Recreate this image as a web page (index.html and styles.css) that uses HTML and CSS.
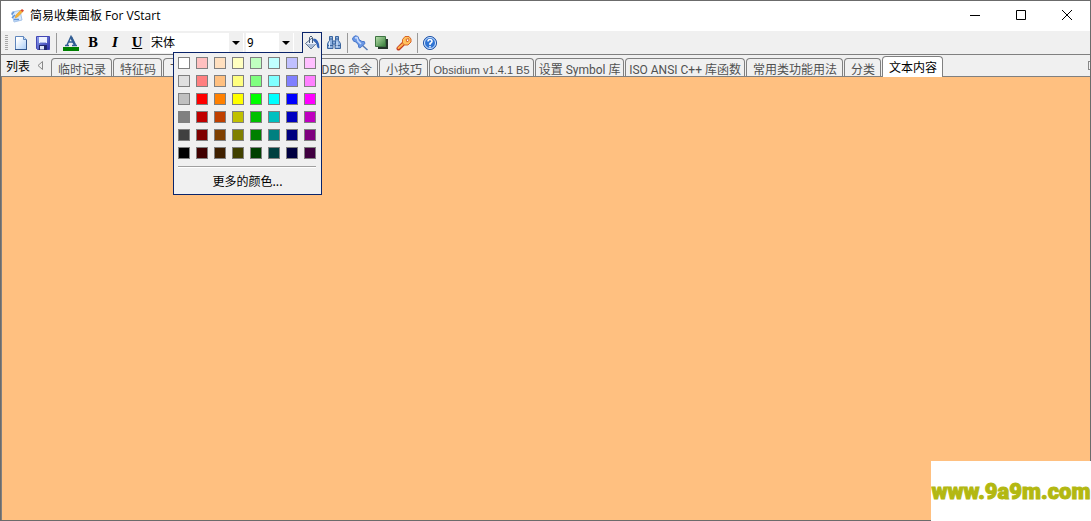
FILE: index.html
```html
<!DOCTYPE html>
<html lang="zh-CN">
<head>
<meta charset="utf-8">
<title>简易收集面板 For VStart</title>
<link rel="stylesheet" href="styles.css">
</head>
<body>
<div class="window">
  <header class="titlebar">
    <svg class="app-icon" width="14" height="14" viewBox="0 0 14 14"><path d="M2 3 10 1.500 12 11 4 13Z" fill="#d9e9fb" stroke="#a5c3ea"/><path d="M1.500 5.500 4 3M2 9l3-3M4 10.500h5" stroke="#5d94dc" stroke-width="1.500"/><path d="M5 9 6 6 11 1l2 1.500L7.500 8Z" fill="#f6b436" stroke="#d99a3a" stroke-width=".6"/><path d="m10.500 1.500 1.500-1.500 2 1.500L12.500 3Z" fill="#dc4934"/></svg>
    <h1 class="title">简易收集面板 For VStart</h1>
    <div class="caption-buttons">
      <button class="caption" aria-label="最小化"><svg width="12" height="12"><path d="M1 5.500h10" stroke="#000"/></svg></button>
      <button class="caption" aria-label="最大化"><svg width="12" height="12"><path d="M1.500.500h9v9h-9z" fill="none" stroke="#000"/></svg></button>
      <button class="caption" aria-label="关闭"><svg width="12" height="12"><path d="m1 0 10 10M11 0 1 10" stroke="#000"/></svg></button>
    </div>
  </header>

  <div class="toolbar">
    <span class="grip"></span>
    <button class="tool" aria-label="新建"><svg width="16" height="16" viewBox="0 0 16 16"><defs><linearGradient id="doc" x2="1" y2="1"><stop offset=".2" stop-color="#fff"/><stop offset="1" stop-color="#a9cdf7"/></linearGradient></defs><path d="M2.500 1.500h8l3 3v10h-11z" fill="url(#doc)" stroke="#5f86bd"/><path d="M2 14.500h12M13.500 5v10" stroke="#34588f"/><path d="M10.500 1.500v3h3" fill="#c9def8" stroke="#5f86bd"/></svg></button>
    <button class="tool" aria-label="保存"><svg width="16" height="16" viewBox="0 0 16 16"><defs><linearGradient id="disk" x2="1" y2="1"><stop stop-color="#8fa2f0"/><stop offset="1" stop-color="#2b2fa8"/></linearGradient></defs><path d="M1.500 1.500h13v13h-12l-1-1z" fill="url(#disk)" stroke="#4347b4"/><path d="M4 2h8v6H4z" fill="#eef2ff"/><path d="M4 10h8v5H4z" fill="#20266c"/><path d="M5 11h4v3.500H5z" fill="#dce3f7"/><path d="M5 7.500h6" stroke="#afbce9"/></svg></button>
    <span class="divider"></span>
    <button class="tool" aria-label="文字颜色"><svg width="16" height="16" viewBox="0 0 16 16"><path d="M0 12h16v4H0z" fill="#008000"/><path d="M2 10.500h4M9 10.500h5M4 10 8 1.500 12 10M5.500 7h5" fill="none" stroke="#315d94" stroke-width="1.500"/><path d="m8 2 4 8" stroke="#315d94" stroke-width="2.500"/></svg></button>
    <button class="tool letter">B</button>
    <button class="tool letter italic">I</button>
    <button class="tool letter underline">U</button>
    <span class="combo font-name">
      <select aria-label="字体"><option>宋体</option></select>
      <svg class="arrow" width="8" height="4"><path d="M0 0h8L4 4z" fill="#000"/></svg>
    </span>
    <span class="combo font-size">
      <select aria-label="字号"><option>9</option></select>
      <svg class="arrow" width="8" height="4"><path d="M0 0h8L4 4z" fill="#000"/></svg>
    </span>
    <div class="fill">
      <button class="fill-button" aria-label="背景颜色" aria-expanded="true"><svg width="16" height="16" viewBox="0 0 16 16"><path d="M1.500 8.500 8 3l4.500 5.500-5.500 5.500Z" fill="#e9effa" stroke="#536987"/><path d="m2.500 9 4.500 4.500 5-4.500Z" fill="#a9bbd6"/><path d="M5.500 8V2.500q1.500-3 3 0V8" fill="none" stroke="#435a7a"/><path d="M9.500 3.500Q15 3.500 15.500 13q-2.500 1-3-4Q12 6.500 9.500 6Z" fill="#3264ba"/></svg></button>
      <div class="palette">
        <div class="swatches" id="swatches"></div>
        <hr class="palette-rule">
        <button class="more">更多的颜色...</button>
      </div>
    </div>
    <button class="tool" aria-label="查找"><svg width="16" height="16" viewBox="0 0 16 16"><g fill="#8eb1df" stroke="#3b659e"><path d="M3.500 1.500h3v4l.5 3v5H1.500v-5l2-3zM9.500 1.500h3v4l2 3v5H9v-5l.5-3z"/><path d="M6.500 6h3v3h-3z"/></g><path d="M2 10.500h5M9 10.500h5M3.500 4h3M9.500 4h3" stroke="#3b659e"/><path d="M3.500 6.500v6M11 6.500v6" stroke="#e3effd"/></svg></button>
    <span class="divider slim"></span>
    <button class="tool" aria-label="置顶"><svg width="16" height="16" viewBox="0 0 16 16"><path d="m10 10 5.500 5" stroke="#5378b4" stroke-width="1.500"/><path d="M1 2.500Q3-.5 6 1.500l1 3 3 2q3-1 3 2l-5 4.500q-2 0-1.500-3L4 7Q1 7 .5 4Z" fill="#6997e5" stroke="#4c7acb"/><path d="m3 3 2-.5L6 6l3 3" fill="none" stroke="#c9dcff" stroke-width="1.500"/></svg></button>
    <button class="tool" aria-label="阴影"><svg width="16" height="16" viewBox="0 0 16 16"><defs><linearGradient id="leaf" x2="1" y2="1"><stop stop-color="#bbe1ae"/><stop offset="1" stop-color="#337c37"/></linearGradient></defs><path d="M4 4h10v10H4z" fill="#24342a"/><path d="M1.500 1.500h10v10h-10z" fill="url(#leaf)" stroke="#3e7442"/></svg></button>
    <button class="tool" aria-label="设置"><svg width="16" height="16" viewBox="0 0 16 16"><path d="m7.500 8.500-5 5" stroke="#c33b20" stroke-width="4" stroke-linecap="round"/><path d="m7.500 8.500-5 4.500" stroke="#ffb44e" stroke-width="2" stroke-linecap="round"/><path d="M6.500 4.500 9 1.500h4L15 4v3l-3 3H8.500l-2-2Z" fill="#ffc25e" stroke="#d86427"/><path d="m10 4.500 2.500-1 .5 2-2 1.500Z" fill="#fff" stroke="#d86427"/></svg></button>
    <span class="divider slim"></span>
    <button class="tool" aria-label="帮助"><svg width="16" height="16" viewBox="0 0 16 16"><circle cx="8" cy="8" r="6.500" fill="#2f74d4" stroke="#1c4fa3"/><circle cx="8" cy="8" r="5.500" fill="none" stroke="#d7e8ff"/><path d="M6 6.500Q6 4.500 8 4.500t2 2Q10 7.500 8 8.500V10M8 11v1.500" fill="none" stroke="#fff" stroke-width="1.500"/></svg></button>
  </div>

  <nav class="tabs">
    <span class="list-label">列表</span>
    <button class="scroll" aria-label="向左"><svg width="6" height="9"><path d="M5.500.5v8L1 4.500Z" fill="none" stroke="#888"/></svg></button>
    <div class="tab-list" role="tablist">
      <button class="tab" role="tab">临时记录</button>
      <button class="tab" role="tab">特征码</button>
      <button class="tab tab-long" role="tab">下</button>
      <button class="tab tab-debug" role="tab">DBG 命令</button>
      <button class="tab" role="tab">小技巧</button>
      <button class="tab tab-obsidium" role="tab">Obsidium v1.4.1 B5</button>
      <button class="tab tab-symbol" role="tab">设置 Symbol 库</button>
      <button class="tab tab-iso" role="tab">ISO ANSI C++ 库函数</button>
      <button class="tab" role="tab">常用类功能用法</button>
      <button class="tab" role="tab">分类</button>
      <button class="tab active" role="tab" aria-selected="true">文本内容</button>
    </div>
    <button class="scroll-right" aria-label="向右"><svg width="2" height="9"><path d="M.5 0v9M0 .5h2M0 8.500h2" stroke="#888"/></svg></button>
  </nav>
  <main class="content"></main>
</div>
<div class="watermark">www.9a9m.com</div>
<script src="script.js"></script>
</body>
</html>
```
FILE: styles.css
```css
* { box-sizing: border-box; }
body {
  margin: 0;
  font: 12px/16px "Noto Sans CJK SC", sans-serif;
  color: #000;
}
button {
  margin: 0;
  padding: 0;
  border: 0;
  background: none;
  font: inherit;
  color: inherit;
}
svg { display: block; flex: none; }
.window {
  display: flex;
  flex-direction: column;
  min-height: 100vh;
  border: 1px solid #6b6b6b;
  background: #f0f0f0;
}
.titlebar {
  display: flex;
  align-items: center;
  height: 30px;
  padding-left: 9px;
  gap: 6px;
  background: #fff;
}
.title {
  flex: 1;
  margin: 0;
  font: 12px/16px "Open Sans", "Noto Sans CJK SC", sans-serif;
}
.caption-buttons { display: flex; }
.caption {
  display: grid;
  place-items: center;
  width: 46px;
  height: 30px;
}
.toolbar {
  display: flex;
  align-items: center;
  height: 23px;
  padding-left: 4px;
}
.grip {
  width: 3px;
  height: 16px;
  margin-right: 2px;
  background: repeating-linear-gradient(#a8a8a8 0 1px, #f0f0f0 1px 2px);
}
.tool {
  display: grid;
  place-items: center;
  width: 22px;
  height: 22px;
}
.letter { font: 900 12px/16px "DejaVu Serif", serif; }
.italic { font-style: italic; }
.underline { text-decoration: underline; }
.divider {
  width: 1px;
  height: 20px;
  margin: 0 3px 0 2px;
  background: #999;
}
.slim { margin: 0 1px 0 2px; }
.combo {
  position: relative;
  height: 20px;
  margin-left: 2px;
  border-right: 1px solid #fff;
  background: linear-gradient(#fff, #fff) left / calc(100% - 14px) 100% no-repeat;
}
.font-name { width: 94px; }
.font-size { width: 48px; }
.combo select {
  display: block;
  width: 100%;
  height: 20px;
  padding: 0 0 0 1px;
  border: 0;
  background: none;
  appearance: none;
  font: 12px/20px Roboto, "Noto Sans CJK SC", sans-serif;
  color: #000;
}
.arrow {
  position: absolute;
  right: 3px;
  top: 8px;
  pointer-events: none;
}
.fill {
  position: relative;
  align-self: flex-start;
  z-index: 2;
  margin: 1px 1px 0 8px;
}
.fill-button {
  position: relative;
  z-index: 2;
  display: grid;
  place-items: center;
  width: 20px;
  height: 21px;
  border: 1px solid #0a246a;
  border-bottom: 0;
  background: #f0f0f0;
}
.palette {
  position: absolute;
  top: 20px;
  right: 0;
  width: 149px;
  padding: 4px;
  border: 1px solid #0a246a;
  background: #f0f0f0;
}
.swatches {
  display: grid;
  grid-template-columns: repeat(8, 12px);
  gap: 6px;
}
.swatch {
  height: 12px;
  border: 1px solid #808080;
}
.palette-rule {
  height: 2px;
  margin: 7px 1px 4px 0;
  border: 0;
  border-top: 1px solid #a0a0a0;
  background: #fff;
}
.more {
  display: block;
  width: 100%;
  height: 18px;
}
.tabs {
  display: flex;
  height: 23px;
  border-top: 1px solid #808080;
  border-bottom: 1px solid #808080;
}
.list-label { padding: 3px 0 0 5px; }
.scroll {
  align-self: flex-start;
  padding: 6px 8px 0 7px;
}
.tab-list {
  display: flex;
  flex: 1;
  align-items: flex-end;
  gap: 1px;
}
.tab {
  flex: none;
  height: 18px;
  padding: 3px 5px 0 6px;
  border: 1px solid #808080;
  border-bottom: 0;
  border-radius: 4px 4px 0 0;
  overflow: hidden;
  text-align: center;
  white-space: nowrap;
  font-family: Roboto, "Noto Sans CJK SC", sans-serif;
  color: #505050;
}
.tab-long { width: 142px; text-align: left; }
.tab-debug { width: 72px; text-align: right; }
.tab-obsidium {
  width: 105px;
  padding: 3px 0 0;
  font: 11px/16px "Liberation Sans", sans-serif;
}
.tab-symbol { width: 89px; padding: 3px 0 0; }
.tab-iso { width: 120px; padding: 3px 0 0; }
.active {
  height: 21px;
  margin-bottom: -1px;
  padding-bottom: 2px;
  background: #fff;
  color: #000;
}
.scroll-right { align-self: flex-start; padding-top: 6px; }
.content {
  flex: 1;
  border-left: 1px solid #808080;
  background: #ffc080;
}
.watermark {
  position: fixed;
  right: 0;
  bottom: 0;
  width: 160px;
  height: 60px;
  overflow: hidden;
  background: #fff;
  color: #b3b811;
  font: 900 22px/62px Roboto, sans-serif;
  text-align: center;
  -webkit-text-stroke: 1px #b3b811;
}
```
FILE: script.js
```js
const rows = [
  "#ffffff #ffc0c0 #ffe0c0 #ffffc0 #c0ffc0 #c0ffff #c0c0ff #ffc0ff",
  "#e0e0e0 #ff8080 #ffc080 #ffff80 #80ff80 #80ffff #8080ff #ff80ff",
  "#c0c0c0 #ff0000 #ff8000 #ffff00 #00ff00 #00ffff #0000ff #ff00ff",
  "#808080 #c00000 #c04000 #c0c000 #00c000 #00c0c0 #0000c0 #c000c0",
  "#404040 #800000 #804000 #808000 #008000 #008080 #000080 #800080",
  "#000000 #400000 #402000 #404000 #004000 #004040 #000040 #400040"
];
const grid = document.getElementById("swatches");
for (const color of rows.join(" ").split(" ")) {
  const swatch = document.createElement("button");
  swatch.className = "swatch";
  swatch.style.backgroundColor = color;
  swatch.setAttribute("aria-label", color);
  grid.append(swatch);
}
```
